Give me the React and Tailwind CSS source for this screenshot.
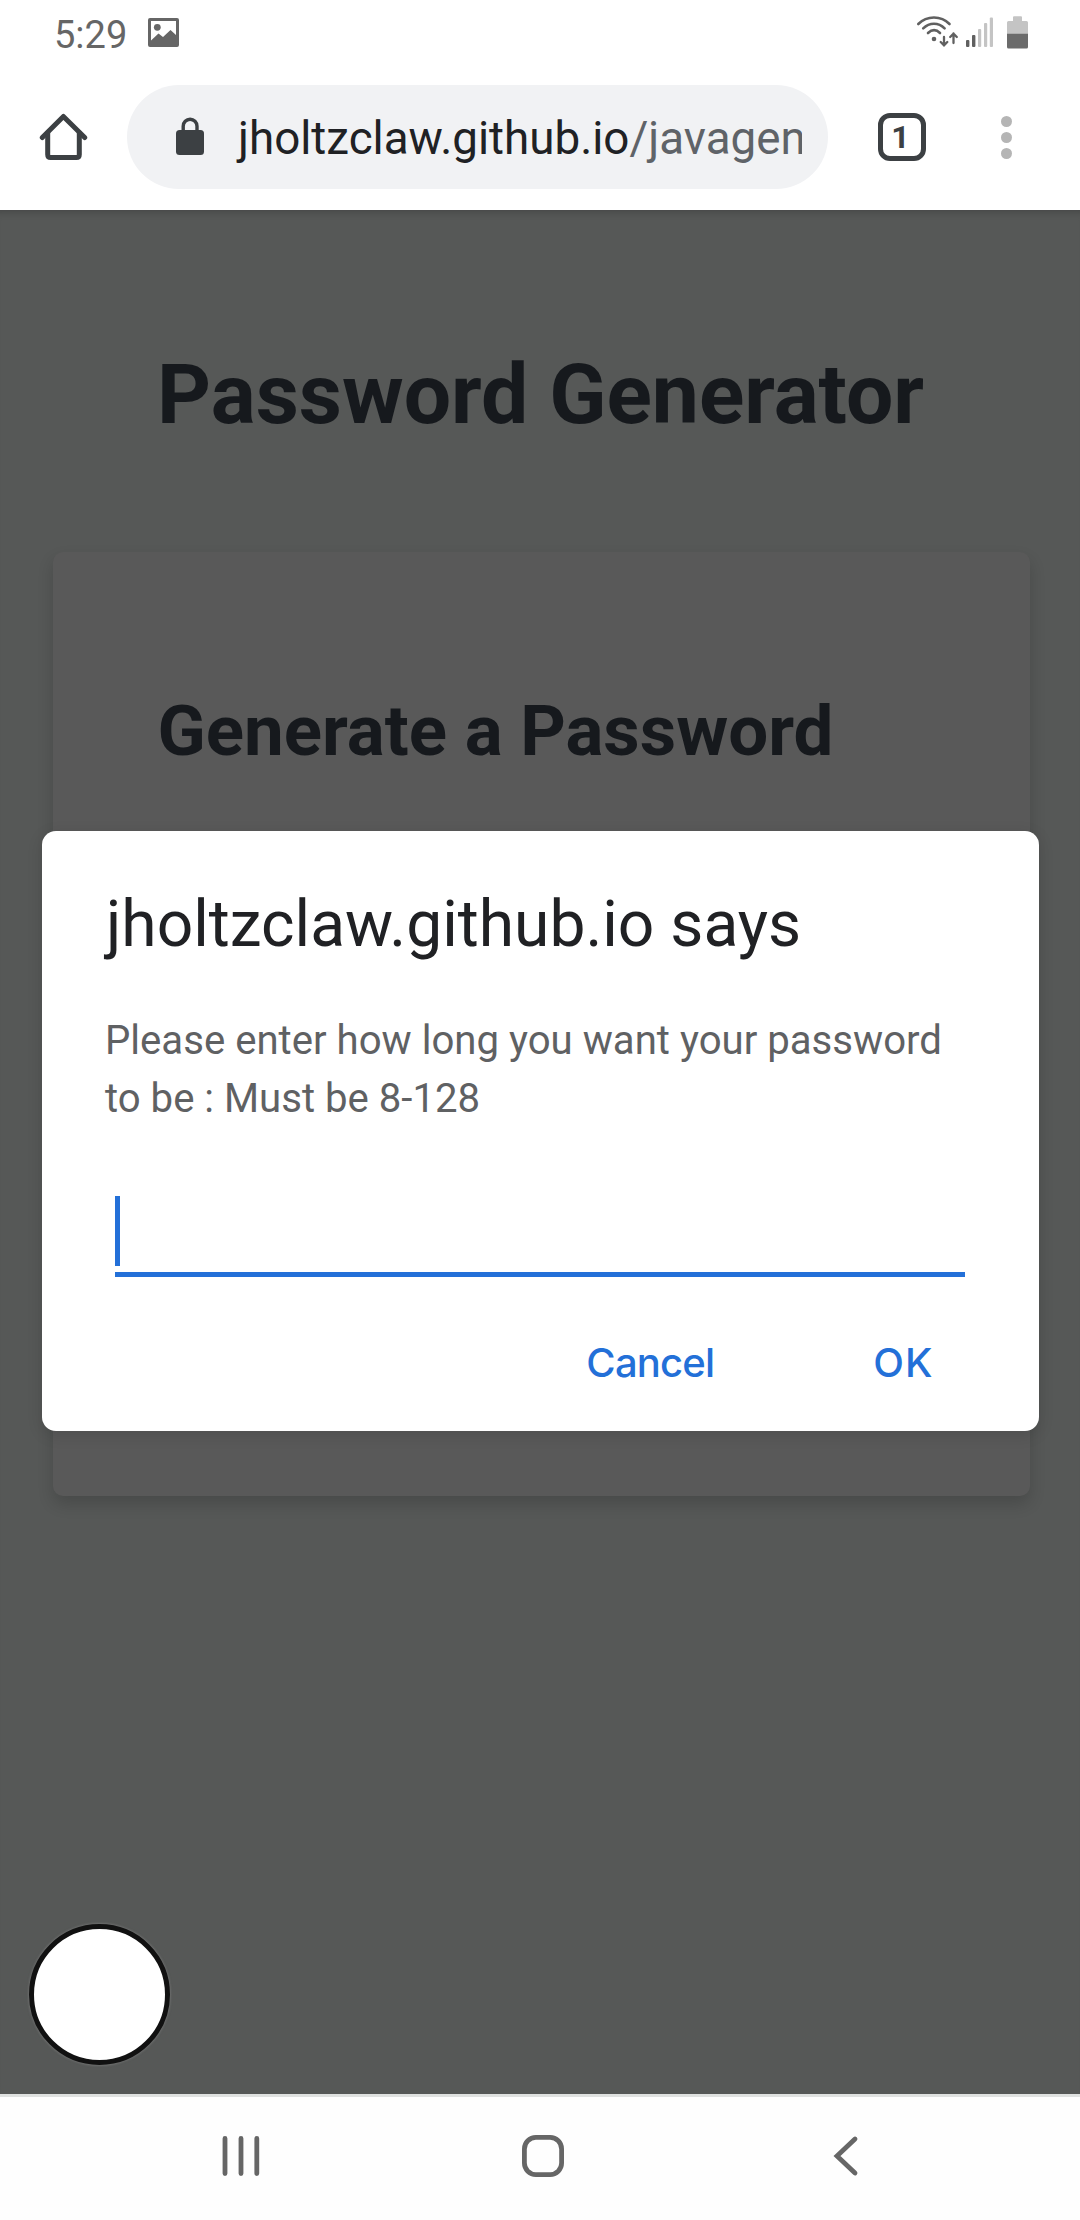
function PictureIcon() {
  return (
    <svg className="ml-[22px] mt-[18px] h-[29px] w-8" viewBox="0 0 32 29" fill="#666666">
      <path
        fillRule="evenodd"
        d="M2 0H29Q31 0 31 2V27Q31 29 29 29H2Q0 29 0 27V2Q0 0 2 0ZM3 3V22.5L10.5 15.5L15 19L22.5 12L28 17V3Z"
      />
      <circle cx="9.3" cy="9.3" r="3.4" />
    </svg>
  );
}

function WifiIcon() {
  return (
    <svg className="h-9 w-[44px]" viewBox="0 0 44 36" fill="none" stroke="#606060" strokeWidth="2.6" strokeLinecap="round">
      <path d="M2.3 12C11 3.4 25 3.4 33.5 12" />
      <path d="M7.2 16.4C13.5 10.2 22.5 10.2 28.6 16.4" />
      <path d="M12 21C16 17.3 20.2 17.3 24 21" />
      <circle cx="18" cy="27" r="2.3" fill="#606060" stroke="none" />
      <path d="M28 25V33M24.7 30L28 33.3L31.3 30" strokeWidth="2.3" />
      <path d="M37.5 31V21.5M34.2 25L37.5 21.7L40.8 25" strokeWidth="2.3" />
    </svg>
  );
}

function SignalIcon() {
  return (
    <svg className="ml-[6px] h-9 w-7" viewBox="0 0 28 36">
      <rect x="0" y="28" width="3.4" height="7" rx="1" fill="#606060" />
      <rect x="6" y="23" width="3.4" height="12" rx="1" fill="#606060" />
      <rect x="12" y="17" width="3.2" height="18" rx="1" fill="#c4c4c4" />
      <rect x="18" y="11" width="3.2" height="24" rx="1" fill="#c4c4c4" />
      <rect x="23.8" y="5.6" width="3.2" height="29.4" rx="1" fill="#c4c4c4" />
    </svg>
  );
}

function BatteryIcon() {
  return (
    <svg className="ml-[13px] h-[37px] w-[21px]" viewBox="0 0 21 37">
      <path d="M7 4.3H14Q15 4.3 15 5.3V9H19.5Q21 9 21 10.5V22H0V10.5Q0 9 1.5 9H6V5.3Q6 4.3 7 4.3Z" fill="#c4c4c4" />
      <path d="M0 21.7H21V35Q21 36.5 19.5 36.5H1.5Q0 36.5 0 35Z" fill="#6b6b6b" />
    </svg>
  );
}

function StatusBar() {
  return (
    <div className="flex h-16 items-start pl-[54px] pr-[52px] text-[38px] leading-[70px] text-[#666666]">
      <span className="w-[72px] whitespace-nowrap">5:29</span>
      <PictureIcon />
      <div className="ml-auto flex pt-3">
        <WifiIcon />
        <SignalIcon />
        <BatteryIcon />
      </div>
    </div>
  );
}

function Toolbar() {
  return (
    <div className="flex h-[146px] items-center pl-[39px]">
      <svg className="h-12 w-[49px]" viewBox="0 0 49 48" fill="none" stroke="#3c4043" strokeWidth="5" strokeLinecap="round" strokeLinejoin="round">
        <path d="M3.3 24.5L24.4 3.5L45.7 24.5" />
        <path d="M8.7 20V41.5Q8.7 44.5 11.7 44.5H37.3Q40.3 44.5 40.3 41.5V20" />
      </svg>
      <div className="ml-[38.5px] flex h-[104px] w-[701.5px] items-center rounded-full bg-[#f1f2f4] pl-[49px]">
        <svg className="mb-[2px] h-[38px] w-7 shrink-0" viewBox="0 0 28 38">
          <path d="M7.2 15V9.2A6.9 7 0 0 1 21 9.2V15" fill="none" stroke="#3c4043" strokeWidth="3.4" />
          <rect x="0" y="13" width="28" height="25" rx="3.5" fill="#3c4043" />
        </svg>
        <div className="ml-[31px] w-[567.5px] overflow-hidden whitespace-nowrap pl-[3.5px] pt-[3px] text-[45.75px] leading-[60px] text-[#202124]">
          jholtzclaw.github.io<span className="text-[#5f6368]">/javagen</span>
        </div>
      </div>
      <div className="ml-[49.5px] flex h-12 w-12 items-center justify-center rounded-[12px] border-[5px] border-[#3c4043] text-[32px] font-bold leading-none text-[#3c4043]">
        <span className="pr-[2px]">1</span>
      </div>
      <div className="ml-[75.5px] flex flex-col gap-[5px]">
        <i className="h-[11px] w-[11px] rounded-full bg-[#b5b5b5]" />
        <i className="h-[11px] w-[11px] rounded-full bg-[#b5b5b5]" />
        <i className="h-[11px] w-[11px] rounded-full bg-[#b5b5b5]" />
      </div>
    </div>
  );
}

function PromptDialog() {
  return (
    <div className="absolute left-[42px] top-[831px] flex h-[600px] w-[996.5px] flex-col rounded-[14px] bg-white px-[63px] pt-[54px] shadow-[0_4px_16px_rgba(0,0,0,0.12)]">
      <h3 className="whitespace-nowrap pl-[1px] text-[64.1px] leading-[80px] text-[#202124]">jholtzclaw.github.io says</h3>
      <p className="mt-[47px] whitespace-nowrap text-[40.15px] leading-[57.5px] text-[#5f6163]">
        Please enter how long you want your password
        <br />
        to be : Must be 8-128
      </p>
      <div className="ml-[10px] mt-[69px] h-[81px] w-[850px] border-b-[5px] border-[#2370d8]">
        <div className="h-[70px] w-[5px] bg-[#2370d8]" />
      </div>
      <div className="mt-[61px] flex justify-end pr-[42px] font-['Inter'] text-[40px] font-medium leading-[50px] text-[#2370d8]">
        <button className="mr-[159px] tracking-[-0.8px]">Cancel</button>
        <button className="tracking-[1px]">OK</button>
      </div>
    </div>
  );
}

function NavBar() {
  return (
    <div className="flex h-[126px] items-start border-t-[3px] border-[#dfe1e0] bg-[#fefefe] pl-[222px] pt-[38px]">
      <svg className="h-[42px] w-[38px]" viewBox="0 0 38 42" stroke="#666666" strokeWidth="4.8" strokeLinecap="round">
        <path d="M3 3.5V38.5M19 3.5V38.5M34.8 3.5V38.5" />
      </svg>
      <svg className="ml-[262px] h-[42px] w-[42px]" viewBox="0 0 42 42" fill="none" stroke="#666666" strokeWidth="4.8">
        <rect x="2.4" y="2.4" width="37.2" height="37.2" rx="11.5" />
      </svg>
      <svg className="ml-[269px] h-[42px] w-[26px]" viewBox="0 0 26 42" fill="none" stroke="#666666" strokeWidth="4.8" strokeLinecap="round">
        <path d="M22 4L4 21L22 38" />
      </svg>
    </div>
  );
}

export default function App() {
  return (
    <div className="relative flex h-[2220px] w-[1080px] flex-col overflow-hidden bg-white font-['Roboto',sans-serif]">
      <header>
        <StatusBar />
        <Toolbar />
      </header>
      <main className="flex flex-1 flex-col bg-[#565857] px-[53px] pt-[137px] text-[#16191d] shadow-[inset_0_9px_8px_-8px_rgba(0,0,0,0.25)]">
        <h1 className="whitespace-nowrap pl-[104px] text-[84px] font-bold leading-[96px]">Password Generator</h1>
        <section className="mt-[109px] h-[944px] w-[977px] rounded-[10px] bg-[#595959] pl-[104.5px] pt-[139px] shadow-[0_8px_16px_rgba(0,0,0,0.16)]">
          <h2 className="whitespace-nowrap text-[70.875px] font-bold leading-[80px]">Generate a Password</h2>
        </section>
      </main>
      <NavBar />
      <PromptDialog />
      <div className="absolute left-[29px] top-[1923.5px] h-[141px] w-[141px] rounded-full border-[5px] border-[#111111] bg-white shadow-[0_0_2px_1px_rgba(130,130,130,0.5)]" />
    </div>
  );
}
